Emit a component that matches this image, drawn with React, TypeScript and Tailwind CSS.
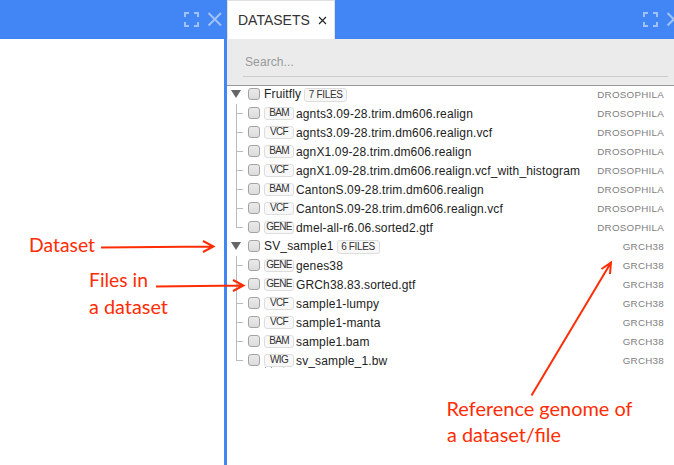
import React from "react";

const groups = [
  {
    name: "Fruitfly",
    count: "7 FILES",
    genome: "DROSOPHILA",
    files: [
      ["BAM", "agnts3.09-28.trim.dm606.realign"],
      ["VCF", "agnts3.09-28.trim.dm606.realign.vcf"],
      ["BAM", "agnX1.09-28.trim.dm606.realign"],
      ["VCF", "agnX1.09-28.trim.dm606.realign.vcf_with_histogram"],
      ["BAM", "CantonS.09-28.trim.dm606.realign"],
      ["VCF", "CantonS.09-28.trim.dm606.realign.vcf"],
      ["GENE", "dmel-all-r6.06.sorted2.gtf"],
    ],
  },
  {
    name: "SV_sample1",
    count: "6 FILES",
    genome: "GRCH38",
    files: [
      ["GENE", "genes38"],
      ["GENE", "GRCh38.83.sorted.gtf"],
      ["VCF", "sample1-lumpy"],
      ["VCF", "sample1-manta"],
      ["BAM", "sample1.bam"],
      ["WIG", "sv_sample_1.bw"],
    ],
  },
];

function WindowIcons() {
  return (
    <svg width="40" height="16" viewBox="0 0 40 16" fill="none" stroke="#a0c2fa" strokeWidth="2" className="shrink-0">
      <path d="M2 6V2H6M11 2H15V6M15 11V15H11M6 15H2V11" />
      <path d="M25.5 2L38 14.5M38 2L25.5 14.5" />
    </svg>
  );
}

function Checkbox() {
  return <span className="mb-px h-3 w-3 shrink-0 rounded-[3px] border border-[#a3a3a3] bg-linear-to-b from-[#eaeaea] to-[#dcdcdc]" />;
}

function Genome({ children }: { children: string }) {
  return <span className="ml-auto mr-[10px] text-[9.8px] leading-none tracking-[0.25px] text-[#808080]">{children}</span>;
}

function Annotations() {
  return (
    <svg className="absolute inset-0" width="674" height="465" fill="none" stroke="#ff2d05" strokeWidth="2">
      <path d="M101 247.500L213 246.500M203 241L213.500 246.500L203 252" />
      <path d="M156 286.500L243 285.500M233 280L243.500 285.500L233 291" />
      <path d="M531.500 395.500L611 262.500M601.500 269L611 262.500L610 274" />
      <g fill="#ff2d05" stroke="none" fontFamily="Lato, sans-serif" fontSize="18.500">
        <text x="29" y="251.500" textLength="66" lengthAdjust="spacingAndGlyphs">Dataset</text>
        <text x="89" y="287" textLength="59" lengthAdjust="spacingAndGlyphs">Files in</text>
        <text x="89" y="313.500" textLength="79" lengthAdjust="spacingAndGlyphs">a dataset</text>
        <text x="446.500" y="416" textLength="186" lengthAdjust="spacingAndGlyphs">Reference genome of</text>
        <text x="447" y="442" textLength="114" lengthAdjust="spacingAndGlyphs">a dataset/file</text>
      </g>
    </svg>
  );
}

export default function App() {
  return (
    <div className="relative flex h-[465px] w-[674px] overflow-hidden bg-white font-['Liberation_Sans',Arial,sans-serif]">
      <div className="flex w-[224px] shrink-0 flex-col">
        <div className="flex h-[39px] justify-end bg-[#4285f4] pr-px pt-[11px]"><WindowIcons /></div>
      </div>
      <div className="w-[3px] shrink-0 bg-[#4285f4]" />
      <div className="flex w-[447px] shrink-0 flex-col">
        <div className="flex h-[39px] bg-[#4285f4]">
          <div className="flex h-10 w-[108px] shrink-0 items-center border border-b-0 border-[#e0e0e0] bg-white pb-[2px] pl-[10px]">
            <span className="text-[14px] leading-none text-[#333]">DATASETS</span>
            <svg width="9" height="9" viewBox="0 0 9 9" className="ml-[8px] mt-px" stroke="#222" strokeWidth="1.100">
              <path d="M1 1L8 8M8 1L1 8" />
            </svg>
          </div>
          <div className="ml-auto mt-[11px] w-[32px] overflow-hidden"><WindowIcons /></div>
        </div>
        <div className="h-[47px] shrink-0 border-b border-[#999] bg-[#ebebeb] pl-4 pr-[6px]">
          <div className="flex h-[38px] items-center border-b border-[#ccc] pl-[2px] pt-[9px] text-[12px] tracking-[0.1px] text-[#999]">
            Search...
          </div>
        </div>
        <div className="-mt-px">
          {groups.map((g) => (
            <div key={g.name}>
              <div className="flex h-[19px] items-center">
                <svg width="10" height="8" viewBox="0 0 10 8" className="mb-px ml-1 shrink-0 fill-[#666]"><path d="M0 0H10L5 8Z" /></svg>
                <span className="ml-[7px] flex"><Checkbox /></span>
                <span className="ml-1 pb-px text-[12px] leading-none tracking-[0.15px] text-[#222]">{g.name}</span>
                <span className="ml-[3px] flex h-[14px] w-[43px] items-center justify-center rounded-[3px] border border-[#ddd] bg-[#f8f8f8] text-[10px] leading-none tracking-[-0.35px] text-[#333]">{g.count}</span>
                <Genome>{g.genome}</Genome>
              </div>
              {g.files.map(([type, name], i) => (
                <div key={name} className="flex h-[19px] items-center">
                  <span className="ml-[9px] flex h-[19px] w-[7px] flex-col">
                    <span className="h-[10px] w-full border-b border-l border-[#bbb]" />
                    <span className={i < g.files.length - 1 ? "h-[9px] border-l border-[#bbb]" : "h-[9px]"} />
                  </span>
                  <span className="ml-[5px] flex"><Checkbox /></span>
                  <span className="-mt-px ml-1 flex h-[13px] w-[30px] shrink-0 items-center justify-center rounded-[3px] border border-[#ddd] bg-[#f8f8f8] text-[10px] leading-none tracking-[-0.65px] text-[#333]">{type}</span>
                  <span className="ml-[2px] whitespace-nowrap text-[12px] leading-none tracking-[0.135px] text-[#222]">{name}</span>
                  <Genome>{g.genome}</Genome>
                </div>
              ))}
            </div>
          ))}
          <div className="-mt-[3px] ml-[38px] flex gap-[5px]">
            <span className="h-px w-px bg-[#999]" />
            <span className="h-px w-px bg-[#999]" />
            <span className="ml-[6px] h-px w-px bg-[#ccc]" />
          </div>
        </div>
      </div>
      <Annotations />
    </div>
  );
}
